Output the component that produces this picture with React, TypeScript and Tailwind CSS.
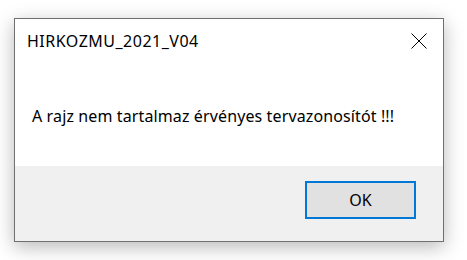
import React from "react";

export default function App() {
  return (
    <div
      className="w-[467px] h-[260px] bg-white pt-[18px] pl-[14px]"
      style={{ fontFamily: '"Noto Sans", "Open Sans", sans-serif' }}
    >
      <div className="w-[430px] h-[224px] border border-[#707070] bg-white flex flex-col shadow-[0_5px_18px_rgba(0,0,0,0.28)]">
        <div className="h-[45px] flex items-start justify-between pl-[12px] pr-[16px] pt-[12px]">
          <span className="text-[16px] leading-[20px] tracking-[0.5px] text-black">HIRKOZMU_2021_V04</span>
          <svg width="16" height="16" viewBox="0 0 16 16" className="mt-[2px]">
            <path d="M0.5 0.5 L15.5 15.5 M15.5 0.5 L0.5 15.5" stroke="#000" strokeWidth="1" fill="none" />
          </svg>
        </div>
        <div className="flex-1 pl-[17px] pt-[40px]">
          <span className="text-[16px] leading-[20px] tracking-[0.12px] text-black">
            A rajz nem tartalmaz érvényes tervazonosítót !!!
          </span>
        </div>
        <div className="h-[75px] bg-[#f0f0f0] flex justify-end items-start pt-[15px] pr-[27px]">
          <button className="w-[111px] h-[38px] border-2 border-[#0078d7] bg-[#e1e1e1] text-[16px] text-black flex items-center justify-center">
            OK
          </button>
        </div>
      </div>
    </div>
  );
}
